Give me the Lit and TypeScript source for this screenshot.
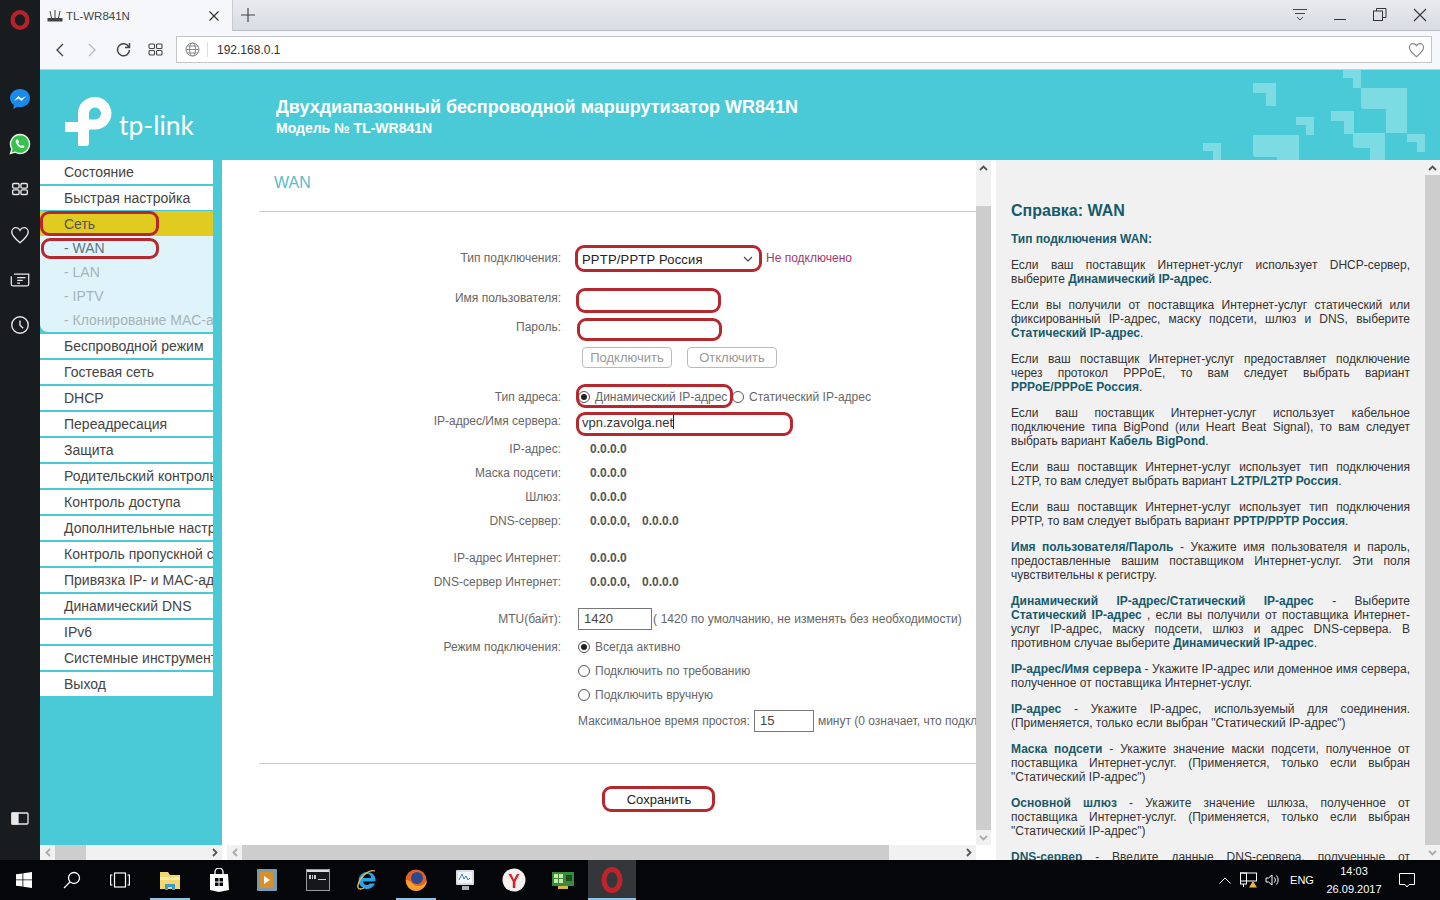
import { LitElement, css, html, svg } from 'lit'
import { customElement } from 'lit/decorators.js'

const MENU_TOP = ['Состояние', 'Быстрая настройка']
const SUBMENU = ['- LAN', '- IPTV', '- Клонирование MAC-адреса']
const MENU_BOTTOM = [
  'Беспроводной режим',
  'Гостевая сеть',
  'DHCP',
  'Переадресация',
  'Защита',
  'Родительский контроль',
  'Контроль доступа',
  'Дополнительные настройки',
  'Контроль пропускной способности',
  'Привязка IP- и MAC-адресов',
  'Динамический DNS',
  'IPv6',
  'Системные инструменты',
  'Выход',
]

const DECOR = [
  [1253, 83, 23],
  [1343, 70, 18],
  [1331, 111, 23],
  [1296, 117, 18],
  [1407, 134, 18],
  [1203, 143, 18],
]

const stroke = (d: string, w = 1.5) =>
  html`<svg class="ico" viewBox="0 0 24 24" fill="none" stroke="currentColor" stroke-width=${w}><path d=${d} /></svg>`

/**
 * Боковая панель браузера
 */
@customElement('side-bar')
export class SideBar extends LitElement {
  static styles = css`
    :host {
      width: 40px;
      background: #191c1e;
      color: #e8e8e8;
      display: flex;
      flex-direction: column;
      align-items: center;
      flex: none;
    }
    .ico {
      width: 22px;
      height: 22px;
      display: block;
    }
    .opera {
      margin-top: 9px;
      margin-bottom: 45px;
    }
    .item {
      height: 45.3px;
      display: flex;
      align-items: center;
      justify-content: center;
    }
    .tail {
      margin-top: auto;
      margin-bottom: 18px;
    }
  `

  render() {
    return html`
      <svg class="ico opera" viewBox="0 0 22 22"><ellipse cx="11" cy="11" rx="7.400" ry="7.900" fill="none" stroke="#b5222a" stroke-width="4.400" /></svg>
      <div class="item">
        <svg class="ico" viewBox="0 0 22 22">
          <path d="M11 1C5.500 1 1 5 1 10c0 2.800 1.400 5.200 3.600 6.800V21l3.600-2.200c.9.200 1.800.3 2.800.3 5.500 0 10-4 10-9.100S16.500 1 11 1z" fill="#1a8bea" />
          <path d="M5 13l4.500-5 2.800 2.600L17 8l-4.500 5-2.800-2.600z" fill="#fff" />
        </svg>
      </div>
      <div class="item">
        <svg class="ico" viewBox="0 0 22 22">
          <path d="M11 1.500a9.500 9.500 0 0 0-8.100 14.400L1.500 20.500l4.700-1.300A9.500 9.500 0 1 0 11 1.500z" fill="#37c24f" stroke="#e8f5e8" stroke-width="1.400" />
          <path d="M7.700 6.500c-.8.500-1.200 1.600-.8 3 .7 2.600 3 4.900 5.600 5.500 1.400.3 2.400-.1 2.900-1 .2-.4 0-.7-.3-.9l-1.500-.8c-.3-.2-.6-.1-.8.200l-.5.600c-1.400-.5-2.600-1.700-3.100-3.100l.6-.5c.3-.2.300-.5.200-.8l-.8-1.600c-.2-.4-.5-.4-.5-.6z" fill="#fff" />
        </svg>
      </div>
      <div class="item">
        <svg class="ico" viewBox="0 0 24 24" fill="none" stroke="currentColor" stroke-width="1.500">
          <rect x="4" y="6" width="7" height="5" rx="1.200" /><rect x="13" y="6" width="7" height="5" rx="1.200" />
          <rect x="4" y="13" width="7" height="5" rx="1.200" /><rect x="13" y="13" width="7" height="5" rx="1.200" />
        </svg>
      </div>
      <div class="item">${stroke('M12 20.500C6 15.500 3 12.500 3 8.800 3 6 5.100 4 7.600 4c1.800 0 3.400 1 4.400 2.800C13 5 14.600 4 16.400 4 18.900 4 21 6 21 8.800c0 3.700-3 6.700-9 11.700z')}</div>
      <div class="item">
        <svg class="ico" viewBox="0 0 24 24" fill="none" stroke="currentColor" stroke-width="1.400">
          <path d="M5.500 5.500H21.500V16.500Q21.500 18.500 19.500 18.500H4.500Q2.500 18.500 2.500 16.500V8" />
          <path d="M9 9.500h9M9 12.500h6M9 15.500h3" />
        </svg>
      </div>
      <div class="item">${stroke('M12 3a9 9 0 1 0 0 18 9 9 0 0 0 0-18zM12 7v5.200l3.500 3.300')}</div>
      <div class="item tail">
        <svg class="ico" viewBox="0 0 22 22" fill="none" stroke="currentColor" stroke-width="1.300">
          <rect x="3" y="5" width="16" height="11" rx="1" /><rect x="3" y="5" width="6" height="11" fill="currentColor" />
        </svg>
      </div>
    `
  }
}

/**
 * Панель вкладок и адресная строка
 */
@customElement('browser-chrome')
export class BrowserChrome extends LitElement {
  static styles = css`
    :host {
      display: block;
      font-family: 'Liberation Sans', Arial, sans-serif;
      color: #333;
    }
    .tabs {
      height: 31px;
      display: flex;
      align-items: stretch;
      background: linear-gradient(#e9ebef, #d8dce2);
      border-bottom: 1px solid #b9bcc1;
      box-sizing: border-box;
    }
    .tab {
      width: 193px;
      height: 31px;
      background: #f5f7fa;
      border-right: 1px solid #c8ccd2;
      box-sizing: border-box;
      display: flex;
      align-items: center;
      padding: 0 12px 0 7px;
      gap: 3px;
      font-size: 11.5px;
      color: #444;
    }
    .tab span {
      flex: 1;
    }
    .plus {
      width: 30px;
      display: flex;
      align-items: center;
      justify-content: center;
    }
    .win {
      margin-left: auto;
      display: flex;
    }
    .win div {
      width: 40px;
      display: flex;
      align-items: center;
      justify-content: center;
    }
    .bar {
      height: 39px;
      background: #f5f7fa;
      border-bottom: 1px solid #a6dce2;
      box-sizing: border-box;
      display: flex;
      align-items: center;
      padding: 0 8px 1px 0;
    }
    .nav {
      width: 136px;
      display: flex;
      align-items: center;
      flex: none;
    }
    .nav div {
      width: 32px;
      display: flex;
      justify-content: center;
    }
    .nav .first {
      margin-left: 4px;
    }
    .nav .tight {
      margin-left: -1px;
    }
    .address {
      flex: 1;
      height: 27px;
      background: #fff;
      border: 1px solid #c4c6c8;
      box-sizing: border-box;
      display: flex;
      align-items: center;
      font-size: 12px;
      color: #333;
    }
    .globe {
      width: 31px;
      height: 100%;
      display: flex;
      align-items: center;
      justify-content: center;
      position: relative;
      flex: none;
    }
    .globe::after {
      content: '';
      position: absolute;
      right: 0;
      top: 5px;
      bottom: 5px;
      width: 1px;
      background: #ddd;
    }
    .url {
      margin-left: 9px;
      padding-top: 1px;
      flex: 1;
    }
    .heart {
      margin-right: 6px;
      display: flex;
    }
  `

  render() {
    return html`
      <div class="tabs">
        <div class="tab">
          <svg width="16" height="14" viewBox="0 0 16 14" fill="none" stroke="#444" stroke-width="1">
            <path d="M3 2l1.500 7M8 1v8M13 2l-1.500 7" /><rect x="1" y="9.500" width="14" height="2.500" fill="#444" />
          </svg>
          <span>TL-WR841N</span>
          <svg width="12" height="12" viewBox="0 0 12 12" stroke="#333" stroke-width="1.200"><path d="M1.500 1.500l9 9M10.500 1.500l-9 9" /></svg>
        </div>
        <div class="plus">
          <svg width="14" height="14" viewBox="0 0 14 14" stroke="#444" stroke-width="1.200"><path d="M7 0v14M0 7h14" /></svg>
        </div>
        <div class="win">
          <div><svg width="16" height="14" viewBox="0 0 16 14" fill="none" stroke="#444"><path d="M1 1.500h14M3 5.500h10M5 9l3 3 3-3" /></svg></div>
          <div><svg width="14" height="14" viewBox="0 0 14 14" stroke="#333" stroke-width="1"><path d="M1 11.500h12" /></svg></div>
          <div><svg width="14" height="14" viewBox="0 0 14 14" fill="none" stroke="#333"><rect x=".5" y="3" width="9" height="9.500" /><path d="M3.500 3V.5h9.500V9.500H9.500" /></svg></div>
          <div><svg width="14" height="14" viewBox="0 0 14 14" stroke="#333" stroke-width="1.100"><path d="M1 1l12 12M13 1L1 13" /></svg></div>
        </div>
      </div>
      <div class="bar">
        <div class="nav">
          <div class="first"><svg width="12" height="14" viewBox="0 0 12 14" fill="none" stroke="#444" stroke-width="1.400"><path d="M9 1L3 7l6 6" /></svg></div>
          <div><svg width="12" height="14" viewBox="0 0 12 14" fill="none" stroke="#bbb" stroke-width="1.400"><path d="M3 1l6 6-6 6" /></svg></div>
          <div class="tight"><svg width="15" height="15" viewBox="0 0 15 15" fill="none" stroke="#444" stroke-width="1.500"><path d="M12.800 5A6 6 0 1 0 13.500 8M13.500 1v4.500H9" /></svg></div>
          <div><svg width="15" height="13" viewBox="0 0 15 13" fill="none" stroke="#444" stroke-width="1.100"><rect x="1" y="1" width="5.500" height="4.500" rx="1" /><rect x="8.500" y="1" width="5.500" height="4.500" rx="1" /><rect x="1" y="7.500" width="5.500" height="4.500" rx="1" /><rect x="8.500" y="7.500" width="5.500" height="4.500" rx="1" /></svg></div>
        </div>
        <div class="address">
          <div class="globe">
            <svg width="15" height="15" viewBox="0 0 15 15" fill="none" stroke="#888" stroke-width="1"><circle cx="7.500" cy="7.500" r="6.500" /><ellipse cx="7.500" cy="7.500" rx="3" ry="6.500" /><path d="M1 7.500h13M2 4h11M2 11h11" /></svg>
          </div>
          <div class="url">192.168.0.1</div>
          <div class="heart">
            <svg width="17" height="16" viewBox="0 0 24 22" fill="none" stroke="#888" stroke-width="1.700"><path d="M12 20.500C6 15.500 2 12 2 7.500 2 4.200 4.500 2 7.200 2c2 0 3.800 1 4.800 3 1-2 2.800-3 4.800-3C19.500 2 22 4.200 22 7.500c0 4.500-4 8-10 13z" /></svg>
          </div>
        </div>
      </div>
    `
  }
}

/**
 * Шапка страницы роутера
 */
@customElement('router-header')
export class RouterHeader extends LitElement {
  static styles = css`
    :host {
      display: flex;
      height: 91px;
      background: #4acad7;
      color: #fff;
      position: relative;
      overflow: hidden;
      font-family: 'Liberation Sans', Arial, sans-serif;
    }
    .logo {
      width: 236px;
      flex: none;
      display: flex;
      align-items: flex-start;
      padding: 27px 0 0 25px;
      box-sizing: border-box;
    }
    .logo svg {
      width: 54px;
      height: 50px;
      flex: none;
    }
    .brand {
      font-family: Lato, Roboto, sans-serif;
      font-weight: 400;
      font-size: 26.5px;
      line-height: 30px;
      margin: 13px 0 0 0;
    }
    .titles {
      padding-top: 27px;
    }
    h1 {
      margin: 0;
      font-size: 18px;
      line-height: 20px;
      font-weight: 700;
    }
    h2 {
      margin: 2px 0 0;
      font-size: 14px;
      line-height: 18px;
      font-weight: 700;
    }
    .decor {
      position: absolute;
      left: 0;
      top: 0;
    }
  `

  render() {
    return html`
      <div class="logo">
        <svg viewBox="0 0 54 50" fill="#fff">
          <path d="M13 49V35H0V25h13V16.500C13 7 20.500 0 30 0c9 0 16.500 7.500 16.500 16.500S39 32.500 30 32.500h-6V22.500h6c3.300 0 6-2.700 6-6s-2.700-6-6-6-6 2.700-6 6V46q0 3-3 3z" />
        </svg>
        <div class="brand">tp-link</div>
      </div>
      <div class="titles">
        <h1>Двухдиапазонный беспроводной маршрутизатор WR841N</h1>
        <h2>Модель № TL-WR841N</h2>
      </div>
      <svg class="decor" width="1400" height="91" viewBox="40 70 1400 91" fill="#7cdbe3">
        ${DECOR.map(([x, y, s]) => {
          const t = Math.round(s * 0.45)
          return svg`<path d="M${x} ${y}h${s}v${s}h-${t}v-${s - t}h-${s - t}z" />`
        })}
        <path d="M1361 88h46v45h-21v-24h-22q-3 0-3-3z" />
        <path d="M1353 133h32v27h-15v-12h-14q-3 0-3-3z" />
        <path d="M1253 135h46v25h-22v-3h-21q-3 0-3-3z" />
      </svg>
    `
  }
}

/**
 * Меню слева
 */
@customElement('router-menu')
export class RouterMenu extends LitElement {
  static styles = css`
    :host {
      display: block;
      width: 173px;
      font-family: 'Liberation Sans', Arial, sans-serif;
      font-size: 14px;
      color: #444;
      flex: none;
      position: relative;
    }
    .item {
      height: 24px;
      line-height: 24px;
      background: #fff;
      margin-bottom: 2px;
      padding-left: 24px;
      white-space: nowrap;
      overflow: hidden;
    }
    .active {
      background: #e2cb20;
      height: 25px;
      line-height: 26px;
      margin-top: -1px;
      margin-bottom: 0;
      color: #555;
    }
    .sub {
      background: #dff4fa;
      border-bottom-left-radius: 8px;
      margin-bottom: 2px;
      height: 96px;
    }
    .sub div {
      height: 24px;
      line-height: 24px;
      padding-left: 24px;
      color: #a7b3b8;
      white-space: nowrap;
      overflow: hidden;
    }
    .sub .cur {
      color: #64737b;
    }
    .ring {
      position: absolute;
      border: 3px solid #b7282e;
      border-radius: 9px;
      box-sizing: border-box;
      pointer-events: none;
    }
    .r-net {
      left: 0;
      top: 51px;
      width: 119px;
      height: 25px;
    }
    .r-wan {
      left: 1px;
      top: 78px;
      width: 118px;
      height: 21px;
    }
  `

  render() {
    return html`
      ${MENU_TOP.map((m) => html`<div class="item">${m}</div>`)}
      <div class="item active">Сеть</div>
      <div class="sub">
        <div class="cur">- WAN</div>
        ${SUBMENU.map((m) => html`<div>${m}</div>`)}
      </div>
      ${MENU_BOTTOM.map((m) => html`<div class="item">${m}</div>`)}
      <div class="ring r-net"></div>
      <div class="ring r-wan"></div>
    `
  }
}

/**
 * Форма настройки WAN
 */
@customElement('wan-form')
export class WanForm extends LitElement {
  static styles = css`
    :host {
      display: block;
      height: 685px;
      overflow: hidden;
      background: #fff;
      font-family: 'Liberation Sans', Arial, sans-serif;
      font-size: 12px;
      color: #666;
      position: relative;
    }
    .title {
      font-size: 16px;
      line-height: 20px;
      color: #57bcc8;
      padding: 13px 0 18px 52px;
    }
    hr {
      border: 0;
      border-top: 1px solid #ccc;
      margin: 0 0 0 37px;
    }
    .rows {
      padding-top: 34px;
    }
    .row {
      height: 24px;
      display: flex;
      align-items: center;
      white-space: nowrap;
    }
    .label {
      width: 339px;
      text-align: right;
      flex: none;
      margin-right: 17px;
    }
    .mt16 { margin-top: 16px; }
    .mt13 { margin-top: 13px; }
    .mt6 { margin-top: 6px; }
    .mt5 { margin-top: 5px; }
    .mt4 { margin-top: 4px; }
    .mt2 { margin-top: 2px; }
    .select {
      width: 177px;
      height: 22px;
      box-sizing: border-box;
      display: flex;
      align-items: center;
      justify-content: space-between;
      padding: 2px 2px 0 4px;
      color: #222;
      font-size: 13px;
      letter-spacing: 0.2px;
      position: relative;
    }
    .status {
      margin-left: 11px;
      color: #a3386e;
    }
    .field {
      position: relative;
      height: 22px;
    }
    .f-user { width: 145px; }
    .server {
      width: 215px;
      font-size: 13px;
      color: #333;
      padding: 2px 0 0 4px;
      line-height: 22px;
      box-sizing: border-box;
    }
    .caret {
      display: inline-block;
      width: 1px;
      height: 14px;
      background: #222;
      vertical-align: -2px;
    }
    button {
      font: inherit;
      font-size: 13px;
      height: 21px;
      background: #fff;
      border: 1px solid #bbb;
      border-radius: 4px;
      color: #999;
      padding: 0;
      width: 90px;
    }
    .connect { margin-left: 4px; }
    .disconnect { margin-left: 15px; }
    .radio {
      width: 10px;
      height: 10px;
      border: 1px solid #555;
      border-radius: 50%;
      display: inline-flex;
      align-items: center;
      justify-content: center;
      flex: none;
      margin-right: 5px;
    }
    .radio.on::after {
      content: '';
      width: 6px;
      height: 6px;
      background: #222;
      border-radius: 50%;
    }
    .dyn {
      display: flex;
      align-items: center;
      position: relative;
      width: 154px;
    }
    .val {
      margin-left: 12px;
      font-weight: 700;
      color: #555;
    }
    .input {
      height: 22px;
      box-sizing: border-box;
      border: 1px solid #777;
      background: #fff;
      color: #444;
      padding-left: 5px;
      line-height: 20px;
      flex: none;
      font-size: 13px;
    }
    .mtu { width: 74px; margin-right: 1px; }
    .idle { width: 60px; margin: 0 4px; }
    .indent { padding-left: 356px; }
    .wide { word-spacing: 0.3px; }
    .foot {
      margin-top: 30px;
    }
    .save-row {
      display: flex;
      padding: 25px 0 0 404px;
    }
    .save {
      color: #222;
      border: 0;
      height: 20px;
      width: 66px;
      background: transparent;
      position: relative;
    }
    .ring {
      position: absolute;
      border: 3px solid #b7282e;
      border-radius: 9px;
      box-sizing: border-box;
      pointer-events: none;
    }
    .r-select { left: -3px; top: -2px; width: 187px; height: 27px; }
    .r-user { left: -2px; top: 1px; width: 145px; height: 25px; }
    .r-pass { left: -1px; top: 2px; width: 145px; height: 23px; }
    .r-dyn { left: -2px; top: -6px; width: 157px; height: 24px; }
    .r-server { left: -2px; top: 2px; width: 217px; height: 24px; }
    .r-save { left: -24px; top: -3px; width: 113px; height: 26px; }
  `

  private radio(on = false) {
    return html`<span class="radio ${on ? 'on' : ''}"></span>`
  }

  render() {
    return html`
      <div class="title">WAN</div>
      <hr />
      <div class="rows">
        <div class="row">
          <div class="label">Тип подключения:</div>
          <div class="select">
            <span>PPTP/PPTP Россия</span>
            <svg width="10" height="6" viewBox="0 0 10 6" fill="none" stroke="#444" stroke-width="1.200"><path d="M1 1l4 4 4-4" /></svg>
            <div class="ring r-select"></div>
          </div>
          <div class="status">Не подключено</div>
        </div>
        <div class="row mt16">
          <div class="label">Имя пользователя:</div>
          <div class="field f-user"><div class="ring r-user"></div></div>
        </div>
        <div class="row mt5">
          <div class="label">Пароль:</div>
          <div class="field f-user"><div class="ring r-pass"></div></div>
        </div>
        <div class="row mt6 indent">
          <button class="connect">Подключить</button>
          <button class="disconnect">Отключить</button>
        </div>
        <div class="row mt16">
          <div class="label">Тип адреса:</div>
          <div class="dyn">${this.radio(true)}Динамический IP-адрес<div class="ring r-dyn"></div></div>
          ${this.radio()}Статический IP-адрес
        </div>
        <div class="row">
          <div class="label">IP-адрес/Имя сервера:</div>
          <div class="field server">vpn.zavolga.net<span class="caret"></span><div class="ring r-server"></div></div>
        </div>
        <div class="row mt4"><div class="label">IP-адрес:</div><span class="val">0.0.0.0</span></div>
        <div class="row"><div class="label">Маска подсети:</div><span class="val">0.0.0.0</span></div>
        <div class="row"><div class="label">Шлюз:</div><span class="val">0.0.0.0</span></div>
        <div class="row"><div class="label">DNS-сервер:</div><span class="val">0.0.0.0,</span><span class="val">0.0.0.0</span></div>
        <div class="row mt13"><div class="label">IP-адрес Интернет:</div><span class="val">0.0.0.0</span></div>
        <div class="row"><div class="label">DNS-сервер Интернет:</div><span class="val">0.0.0.0,</span><span class="val">0.0.0.0</span></div>
        <div class="row mt13">
          <div class="label">MTU(байт):</div>
          <div class="input mtu">1420</div><span class="wide">( 1420 по умолчанию, не изменять без необходимости)</span>
        </div>
        <div class="row mt4"><div class="label">Режим подключения:</div>${this.radio(true)}Всегда активно</div>
        <div class="row indent">${this.radio()}Подключить по требованию</div>
        <div class="row indent">${this.radio()}Подключить вручную</div>
        <div class="row mt2 indent">
          Максимальное время простоя:<div class="input idle">15</div>минут (0 означает, что подключение не будет разорвано)
        </div>
      </div>
      <hr class="foot" />
      <div class="save-row">
        <button class="save">Сохранить<div class="ring r-save"></div></button>
      </div>
    `
  }
}

/**
 * Панель справки
 */
@customElement('help-panel')
export class HelpPanel extends LitElement {
  static styles = css`
    :host {
      display: block;
      height: 700px;
      overflow: hidden;
      background: #f1f1f2;
      font-family: 'Liberation Sans', Arial, sans-serif;
      font-size: 12px;
      line-height: 14px;
      color: #333;
      padding: 42px 30px 0 15px;
      box-sizing: border-box;
    }
    h3 {
      margin: 0 0 12px;
      font-size: 16px;
      line-height: 18px;
      color: #175a6a;
    }
    h4 {
      margin: 0 0 12px;
      font-size: 12px;
      line-height: 14px;
      color: #175a6a;
    }
    p {
      margin: 0 0 12px;
      text-align: justify;
    }
    b {
      color: #175a6a;
    }
  `

  render() {
    return html`
      <h3>Справка: WAN</h3>
      <h4>Тип подключения WAN:</h4>
      <p>Если ваш поставщик Интернет-услуг использует DHCP-сервер, выберите <b>Динамический IP-адрес</b>.</p>
      <p>Если вы получили от поставщика Интернет-услуг статический или фиксированный IP-адрес, маску подсети, шлюз и DNS, выберите <b>Статический IP-адрес</b>.</p>
      <p>Если ваш поставщик Интернет-услуг предоставляет подключение через протокол PPPoE, то вам следует выбрать вариант <b>PPPoE/PPPoE Россия</b>.</p>
      <p>Если ваш поставщик Интернет-услуг использует кабельное подключение типа BigPond (или Heart Beat Signal), то вам следует выбрать вариант <b>Кабель BigPond</b>.</p>
      <p>Если ваш поставщик Интернет-услуг использует тип подключения L2TP, то вам следует выбрать вариант <b>L2TP/L2TP Россия</b>.</p>
      <p>Если ваш поставщик Интернет-услуг использует тип подключения PPTP, то вам следует выбрать вариант <b>PPTP/PPTP Россия</b>.</p>
      <p><b>Имя пользователя/Пароль</b> - Укажите имя пользователя и пароль, предоставленные вашим поставщиком Интернет-услуг. Эти поля чувствительны к регистру.</p>
      <p><b>Динамический IP-адрес/Статический IP-адрес</b> - Выберите <b>Статический IP-адрес</b> , если вы получили от поставщика Интернет-услуг IP-адрес, маску подсети, шлюз и адрес DNS-сервера. В противном случае выберите <b>Динамический IP-адрес</b>.</p>
      <p><b>IP-адрес/Имя сервера</b> - Укажите IP-адрес или доменное имя сервера, полученное от поставщика Интернет-услуг.</p>
      <p><b>IP-адрес</b> - Укажите IP-адрес, используемый для соединения. (Применяется, только если выбран "Статический IP-адрес")</p>
      <p><b>Маска подсети</b> - Укажите значение маски подсети, полученное от поставщика Интернет-услуг. (Применяется, только если выбран "Статический IP-адрес")</p>
      <p><b>Основной шлюз</b> - Укажите значение шлюза, полученное от поставщика Интернет-услуг. (Применяется, только если выбран "Статический IP-адрес")</p>
      <p><b>DNS-сервер</b> - Введите данные DNS-сервера, полученные от поставщика Интернет-услуг.</p>
    `
  }
}

/**
 * Панель задач Windows
 */
@customElement('task-bar')
export class TaskBar extends LitElement {
  static styles = css`
    :host {
      display: flex;
      height: 40px;
      background: #05060a;
      color: #fff;
      font-family: 'Liberation Sans', Arial, sans-serif;
      font-size: 11px;
      align-items: stretch;
    }
    .slot {
      width: 48px;
      display: flex;
      align-items: center;
      justify-content: center;
      position: relative;
      flex: none;
      margin-left: 1px;
    }
    .m0 { margin-left: 0; }
    .m2 { margin-left: 2px; }
    .m3 { margin-left: 3px; }
    .slot.under::after {
      content: '';
      position: absolute;
      left: 4px;
      right: 4px;
      bottom: 0;
      height: 2px;
      background: #8fc2e6;
    }
    .slot.active {
      background: #33373a;
    }
    .slot.active::after {
      left: 0;
      right: 0;
    }
    .tray {
      margin-left: auto;
      display: flex;
      align-items: center;
      padding-right: 18px;
    }
    .tray > div {
      display: flex;
      align-items: center;
      justify-content: center;
    }
    .net { margin-left: 9px; }
    .vol { margin-left: 7px; }
    .eng {
      width: 34px;
      margin-left: 4px;
    }
    .clock {
      flex-direction: column;
      width: 70px;
      line-height: 18px;
      text-align: center;
    }
    .notify {
      width: 30px;
      margin-left: 3px;
    }
  `

  render() {
    return html`
      <div class="slot m0"><svg width="16" height="16" viewBox="0 0 16 16" fill="#fff"><path d="M0 2.300L6.500 1.400V7.500H0zM7.300 1.300L16 0V7.500H7.300zM0 8.300H6.500V14.500L0 13.700zM7.300 8.300H16V16L7.300 14.800z" /></svg></div>
      <div class="slot m0"><svg width="18" height="18" viewBox="0 0 18 18" fill="none" stroke="#fff" stroke-width="1.300"><circle cx="11" cy="7" r="5.500" /><path d="M7 11l-6 6" /></svg></div>
      <div class="slot m0"><svg width="20" height="16" viewBox="0 0 20 16" fill="none" stroke="#fff" stroke-width="1.200"><rect x="4.500" y="1" width="11" height="14" /><path d="M2.500 3H.6v10h1.900M17.500 3h1.900v10h-1.900" /></svg></div>
      <div class="slot under m2"><svg width="22" height="22" viewBox="0 0 22 22"><path d="M1 3h8l2 3h10v14H1z" fill="#f3d66f" /><rect x="1" y="8" width="20" height="3" fill="#fbeaa4" /><path d="M6 21v-6h10v6h-3v-3H9v3z" fill="#3b9bc9" /></svg></div>
      <div class="slot"><svg width="20" height="24" viewBox="0 0 20 24"><path d="M6 6V4a4 4 0 0 1 8 0v2" fill="none" stroke="#fff" stroke-width="1.300" /><path d="M1 6h18l1 16-10 2-9-2z" fill="#fff" /><path d="M6 10h3.500v3.500H6zM10.500 10H14v3.500h-3.500zM6 14.500h3.500V18H6zM10.500 14.500H14V18h-3.500z" fill="#05060a" /></svg></div>
      <div class="slot m0"><svg width="20" height="24" viewBox="0 0 20 24"><rect x="0" y="1" width="20" height="22" rx="1" fill="#7a9ab0" /><rect x="3" y="4" width="13" height="16" rx="1" fill="#d8912a" /><path d="M7 8l6 4-6 4z" fill="#fff" /></svg></div>
      <div class="slot m3"><svg width="24" height="22" viewBox="0 0 24 22"><rect x=".5" y=".5" width="23" height="21" fill="#15181a" stroke="#9a9a9a" /><rect x="1" y="1" width="22" height="2" fill="#ddd" /><path d="M3 6h2v4H3zM6 6h1v4H6zM8 6h2v4H8zM12 10h8v1h-8z" fill="#ccc" /></svg></div>
      <div class="slot"><svg width="24" height="24" viewBox="0 0 24 24"><path d="M12 4a8.500 8.500 0 1 0 8 11.500h-5a4 4 0 0 1-7-2h12.500C21 8 17.500 4 12 4zM8 10a4 4 0 0 1 8 0z" fill="#2ba3e5" /><path d="M20 3C14 1 5 9 3 17c-1 4 2 5 6 3" fill="none" stroke="#e7c04a" stroke-width="1.300" /></svg></div>
      <div class="slot under"><svg width="24" height="24" viewBox="0 0 24 24"><circle cx="12" cy="12" r="10.500" fill="#e85d22" /><circle cx="13" cy="10" r="6" fill="#2a4a8e" /><path d="M2 12c0 7 5 11 10 11 6 0 11-5 11-11-2 4-5 6-9 6-6 0-6-6-12-6z" fill="#f3a02d" /></svg></div>
      <div class="slot"><svg width="24" height="24" viewBox="0 0 24 24"><rect x="3" y="2" width="18" height="15" rx="1" fill="#d9dde2" /><rect x="5" y="4" width="14" height="11" fill="#f4f7fa" /><path d="M6 12l3-6 2 5 2-3 2 4 2-2" fill="none" stroke="#3b83c4" stroke-width="1" /><rect x="9" y="18" width="7" height="4" fill="#aab0b6" /></svg></div>
      <div class="slot"><svg width="24" height="24" viewBox="0 0 24 24"><ellipse cx="12" cy="12" rx="11.500" ry="11.500" fill="#f3f0ef" /><path d="M6.500 6l4.300 7.500V20h2.600v-6.500L17.500 6h-2.600L12 11.400 9.200 6z" fill="#d3232a" /></svg></div>
      <div class="slot"><svg width="24" height="22" viewBox="0 0 24 22"><rect x="1" y="3" width="22" height="14" fill="#3a8a3c" /><path d="M3 5h4v4H3zM8 5h4v4H8zM3 10h4v4H3zM8 10h4v4H8z" fill="#c7e8a8" /><rect x="15" y="6" width="6" height="6" fill="#1d4d20" /><rect x="7" y="17" width="10" height="3" fill="#d8b93a" /></svg></div>
      <div class="slot under active"><svg width="24" height="28" viewBox="0 0 24 28"><ellipse cx="12" cy="14" rx="8" ry="10.500" fill="none" stroke="#c2232a" stroke-width="5" /></svg></div>
      <div class="tray">
        <div><svg width="12" height="7" viewBox="0 0 12 7" fill="none" stroke="#fff" stroke-width="1"><path d="M.5 6.500L6 1l5.500 5.500" /></svg></div>
        <div class="net"><svg width="18" height="16" viewBox="0 0 18 16" fill="none" stroke="#fff"><rect x=".5" y="1" width="16" height="8" /><rect x=".5" y="1" width="6" height="11" /><path d="M3.500 12v3" /><path d="M9 15.500L13 9l4 6.500z" fill="#f2b63d" stroke="none" /></svg></div>
        <div class="vol"><svg width="16" height="16" viewBox="0 0 16 16" fill="none" stroke="#fff"><path d="M1 6h2.500L7 3v10L3.500 10H1zM9.500 5.500a4 4 0 0 1 0 5M11.500 3.500a7 7 0 0 1 0 9" /></svg></div>
        <div class="eng">ENG</div>
        <div class="clock"><div>14:03</div><div>26.09.2017</div></div>
        <div class="notify"><svg width="16" height="15" viewBox="0 0 16 15" fill="none" stroke="#fff"><path d="M.5.500h15v11H10l-2 2.500-2-2.500H.5z" /></svg></div>
      </div>
    `
  }
}

@customElement('app-root')
export class AppRoot extends LitElement {
  static styles = css`
    :host {
      display: block;
      width: 1440px;
      height: 900px;
      overflow: hidden;
      background: #fff;
    }
    .top {
      display: flex;
      height: 860px;
    }
    .browser {
      width: 1400px;
      display: flex;
      flex-direction: column;
    }
    .page {
      display: flex;
      height: 700px;
      background: #4acad7;
    }
    .left {
      width: 182px;
      flex: none;
      display: flex;
      flex-direction: column;
    }
    .menu-area {
      height: 685px;
      overflow: hidden;
    }
    .main {
      width: 774px;
      flex: none;
      display: flex;
      background: #fff;
      flex-wrap: wrap;
      align-content: flex-start;
    }
    .main wan-form {
      width: 754px;
    }
    .vbar {
      width: 15px;
      background: #f1f1f1;
      display: flex;
      flex-direction: column;
      align-items: center;
      height: 685px;
      flex: none;
    }
    .vbar .arrow {
      height: 15px;
      display: flex;
      align-items: center;
      justify-content: center;
      flex: none;
    }
    .vthumb {
      background: #cdcdcd;
      width: 100%;
      flex: 1;
    }
    .gap {
      height: 31px;
      flex: none;
    }
    .hbar {
      height: 15px;
      background: #f1f1f1;
      display: flex;
      align-items: center;
    }
    .hbar .arrow {
      width: 15px;
      display: flex;
      align-items: center;
      justify-content: center;
      flex: none;
    }
    .hbar .thumb {
      background: #cdcdcd;
      height: 100%;
    }
    .menu-h .thumb {
      width: 31px;
    }
    .main-h {
      width: 749px;
      margin-left: 5px;
    }
    .main-h .thumb {
      width: 647px;
    }
    .push {
      margin-left: auto;
    }
    .help-wrap {
      position: relative;
      flex: 1;
      overflow: hidden;
    }
    .help-bar {
      position: absolute;
      right: 0;
      top: 0;
      height: 700px;
      z-index: 1;
    }
    .help-bar .vbar {
      height: 700px;
    }
  `

  private up = html`<svg width="9" height="6" viewBox="0 0 9 6" fill="none" stroke="#555" stroke-width="1.800"><path d="M1 5l3.500-3.500L8 5" /></svg>`
  private down = html`<svg width="9" height="6" viewBox="0 0 9 6" fill="none" stroke="#aaa" stroke-width="1.800"><path d="M1 1l3.500 3.500L8 1" /></svg>`
  private leftArrow = html`<svg width="6" height="9" viewBox="0 0 6 9" fill="none" stroke="#aaa" stroke-width="1.800"><path d="M5 1L1.500 4.500 5 8" /></svg>`
  private rightArrow = html`<svg width="6" height="9" viewBox="0 0 6 9" fill="none" stroke="#555" stroke-width="1.800"><path d="M1 1l3.500 3.500L1 8" /></svg>`

  render() {
    return html`
      <div class="top">
        <side-bar></side-bar>
        <div class="browser">
          <browser-chrome></browser-chrome>
          <router-header></router-header>
          <div class="page">
            <div class="left">
              <div class="menu-area"><router-menu></router-menu></div>
              <div class="hbar menu-h">
                <div class="arrow">${this.leftArrow}</div>
                <div class="thumb"></div>
                <div class="arrow push">${this.rightArrow}</div>
              </div>
            </div>
            <div class="main">
              <wan-form></wan-form>
              <div class="vbar">
                <div class="arrow">${this.up}</div>
                <div class="gap"></div>
                <div class="vthumb"></div>
                <div class="arrow">${this.down}</div>
              </div>
              <div class="hbar main-h">
                <div class="arrow">${this.leftArrow}</div>
                <div class="thumb"></div>
                <div class="arrow push">${this.rightArrow}</div>
              </div>
            </div>
            <div class="help-wrap">
              <help-panel></help-panel>
              <div class="help-bar">
                <div class="vbar">
                  <div class="arrow">${this.up}</div>
                  <div class="vthumb"></div>
                  <div class="arrow">${this.down}</div>
                </div>
              </div>
            </div>
          </div>
        </div>
      </div>
      <task-bar></task-bar>
    `
  }
}
